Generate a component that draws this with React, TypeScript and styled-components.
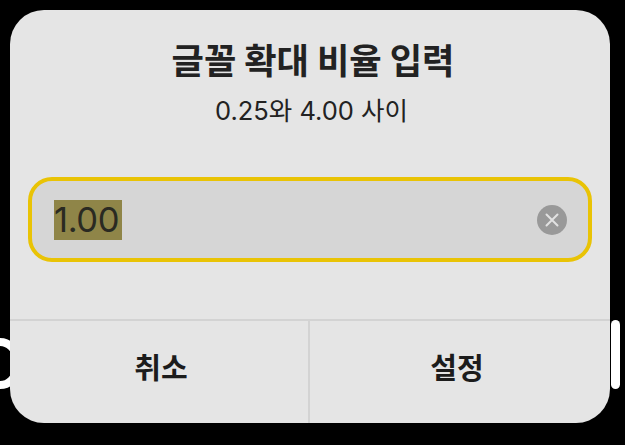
import React from "react";
import styled, { createGlobalStyle } from "styled-components";

const Global = createGlobalStyle`
  html, body { margin: 0; padding: 0; background: #000; }
  body { width: 625px; height: 445px; overflow: hidden; }
`;

const Screen = styled.div`
  position: relative;
  width: 625px;
  height: 445px;
  padding: 10px 15px 22px 10px;
  box-sizing: border-box;
  background: #000;
  font-family: "Noto Sans CJK KR", "Inter", sans-serif;
`;

const RingPeek = styled.div`
  position: absolute;
  left: -40px;
  top: 338px;
  width: 60px;
  height: 51px;
  box-sizing: border-box;
  border: 8px solid #fff;
  border-radius: 20px;
`;

const SidePill = styled.div`
  position: absolute;
  left: 611px;
  top: 320px;
  width: 9px;
  height: 69px;
  border-radius: 5px;
  background: #fff;
`;

const Dialog = styled.div`
  position: relative;
  width: 600px;
  height: 413px;
  border-radius: 34px;
  background: #e5e5e5;
  display: flex;
  flex-direction: column;
  overflow: hidden;
`;

const Body = styled.div`
  height: 310px;
  display: flex;
  flex-direction: column;
  align-items: center;
  box-sizing: border-box;
  padding: 28px 18px 0;
`;

const Title = styled.h1`
  margin: -2px 0 0 6px;
  font-size: 35.2px;
  line-height: 46px;
  font-weight: 700;
  color: #222;
`;

const Subtitle = styled.p`
  margin: 12px 0 0 3px;
  font-family: "Inter", "Noto Sans CJK KR", sans-serif;
  font-size: 25.5px;
  line-height: 34px;
  font-weight: 400;
  color: #222;
`;

const Field = styled.div`
  margin-top: 49px;
  width: 100%;
  height: 85px;
  box-sizing: border-box;
  padding: 0 21px 0 22px;
  display: flex;
  align-items: center;
  justify-content: space-between;
  border: 4px solid #e9c305;
  border-radius: 24px;
  background: #d6d6d6;
`;

const Selected = styled.span`
  display: block;
  width: 68px;
  height: 40px;
  font-family: "Inter", sans-serif;
  font-size: 34.5px;
  line-height: 40px;
  letter-spacing: -0.4px;
  color: #2a2a22;
  background: #8f8548;
  white-space: nowrap;
`;

const Clear = styled.span`
  width: 30px;
  height: 30px;
  border-radius: 50%;
  background: #999;
  display: flex;
  align-items: center;
  justify-content: center;
`;

const Actions = styled.div`
  flex: 1;
  display: grid;
  grid-template-columns: 298px 1fr;
  margin-top: -1px;
  border-top: 2px solid #d3d3d3;
`;

const Action = styled.button`
  border: 0;
  background: transparent;
  padding: 0 0 12px 4px;
  font-family: inherit;
  font-size: 29px;
  font-weight: 700;
  color: #1c1c1c;
`;

const ActionRight = styled(Action)`
  border-left: 2px solid #d3d3d3;
  padding: 0 6px 12px 0;
`;

export default function App() {
  return (
    <Screen>
      <Global />
      <RingPeek />
      <SidePill />
      <Dialog>
        <Body>
          <Title>글꼴 확대 비율 입력</Title>
          <Subtitle>0.25와 4.00 사이</Subtitle>
          <Field>
            <Selected>1.00</Selected>
            <Clear>
              <svg width="16" height="16" viewBox="0 0 16 16" fill="none">
                <path d="M2.5 2.5 13.5 13.5M13.5 2.5 2.5 13.5" stroke="#e2e2e2" strokeWidth="2" strokeLinecap="round" />
              </svg>
            </Clear>
          </Field>
        </Body>
        <Actions>
          <Action>취소</Action>
          <ActionRight>설정</ActionRight>
        </Actions>
      </Dialog>
    </Screen>
  );
}
